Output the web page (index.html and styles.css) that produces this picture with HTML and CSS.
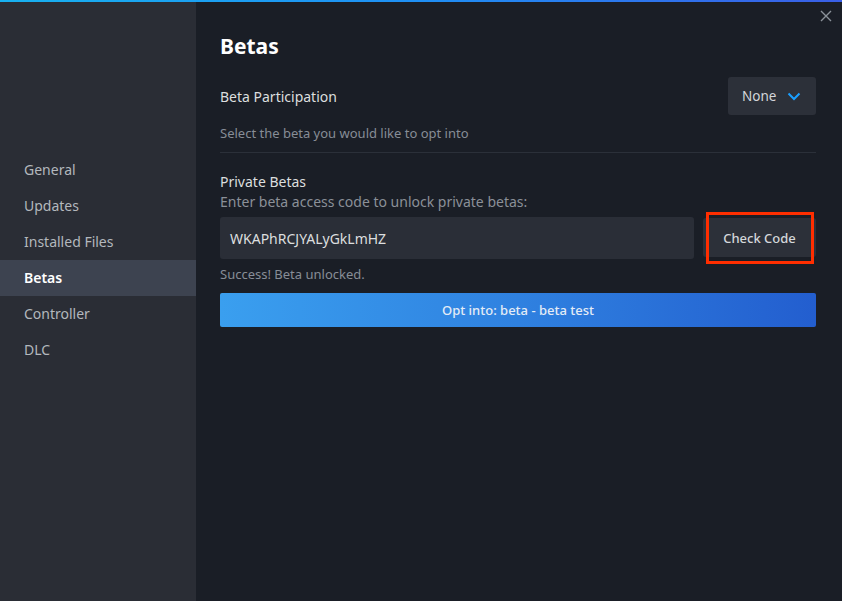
FILE: index.html
```html
<!DOCTYPE html>
<html>
<head>
<meta charset="utf-8">
<link rel="stylesheet" href="styles.css">
</head>
<body>
<div class="topline"></div>
<div class="app">
  <nav class="sidebar">
    <div class="nav-item">General</div>
    <div class="nav-item">Updates</div>
    <div class="nav-item">Installed Files</div>
    <div class="nav-item active">Betas</div>
    <div class="nav-item">Controller</div>
    <div class="nav-item">DLC</div>
  </nav>
  <main class="content">
    <button class="close" aria-label="Close">
      <svg width="12" height="12" viewBox="0 0 12 12"><path d="M1 1L11 11M11 1L1 11" stroke="#8b929a" stroke-width="1.4" fill="none"/></svg>
    </button>
    <h1 class="title">Betas</h1>
    <div class="row-participation">
      <div class="label">Beta Participation</div>
      <div class="dropdown">
        <span>None</span>
        <svg width="14" height="9" viewBox="0 0 14 9"><path d="M1.5 1.5L7 7L12.5 1.5" stroke="#1a9fff" stroke-width="2" fill="none"/></svg>
      </div>
    </div>
    <div class="desc">Select the beta you would like to opt into</div>
    <div class="sep"></div>
    <div class="label private">Private Betas</div>
    <div class="subdesc">Enter beta access code to unlock private betas:</div>
    <div class="code-row">
      <div class="code-input">WKAPhRCJYALyGkLmHZ</div>
      <div class="check-wrap">
        <button class="check-btn">Check Code</button>
        <div class="highlight"></div>
      </div>
    </div>
    <div class="success">Success! Beta unlocked.</div>
    <button class="opt-btn">Opt into: beta - beta test</button>
  </main>
</div>
</body>
</html>
```
FILE: styles.css
```css
* { box-sizing: border-box; }
html, body { margin: 0; padding: 0; }
body {
  width: 842px;
  height: 601px;
  overflow: hidden;
  background: #1a1e26;
  font-family: "Noto Sans", "Open Sans", sans-serif;
  display: flex;
  flex-direction: column;
}
.topline {
  height: 2px;
  background: linear-gradient(90deg, #18b1f0 0%, #1f8ff4 50%, #3a5fe6 100%);
  flex: none;
}
.app {
  flex: 1;
  display: flex;
}
.sidebar {
  width: 196px;
  background: #2a2d35;
  padding-top: 150px;
  display: flex;
  flex-direction: column;
}
.nav-item {
  height: 36px;
  line-height: 36px;
  padding-left: 24px;
  font-size: 14px;
  color: #b3b8bd;
}
.nav-item.active {
  background: #3d4350;
  color: #ffffff;
  font-weight: 600;
}
.content {
  flex: 1;
  position: relative;
  padding: 30px 26px 0 24px;
  display: flex;
  flex-direction: column;
}
.close {
  position: absolute;
  top: 8px;
  right: 10px;
  width: 12px;
  height: 12px;
  padding: 0;
  border: 0;
  background: none;
  display: flex;
}
.title {
  margin: 0;
  font-size: 21px;
  line-height: 28px;
  font-weight: 700;
  color: #ffffff;
}
.row-participation {
  margin-top: 17px;
  display: flex;
  align-items: center;
  justify-content: space-between;
}
.label {
  font-size: 14px;
  color: #dcdedf;
}
.dropdown {
  width: 88px;
  height: 38px;
  background: #2c3039;
  border-radius: 3px;
  display: flex;
  align-items: center;
  padding-left: 14px;
  gap: 11px;
  font-size: 13.5px;
  color: #d4d6d9;
}
.desc {
  margin-top: 7px;
  font-size: 13px;
  line-height: 22px;
  color: #878d96;
}
.sep {
  margin-top: 8px;
  height: 1px;
  background: #2b3039;
}
.private {
  margin-top: 19px;
  line-height: 20px;
}
.subdesc {
  font-size: 14px;
  line-height: 20px;
  color: #8b9098;
}
.code-row {
  margin-top: 5px;
  display: flex;
  align-items: center;
  gap: 9px;
}
.code-input {
  flex: 1;
  height: 42px;
  background: #2a2e37;
  border-radius: 3px;
  padding-left: 10px;
  display: flex;
  align-items: center;
  font-size: 14px;
  color: #dcdedf;
}
.check-wrap {
  position: relative;
  width: 113px;
  height: 42px;
  display: flex;
}
.check-btn {
  flex: 1;
  margin: 1px 0 2px 0;
  border: 0;
  border-radius: 3px;
  background: #2c3039;
  font-family: inherit;
  font-size: 13px;
  font-weight: 500;
  color: #d4d7da;
  padding: 0;
}
.highlight {
  position: absolute;
  left: 3px;
  top: -5px;
  width: 108px;
  height: 52px;
  border: 3px solid #ff2e00;
}
.success {
  margin-top: 5px;
  font-size: 13px;
  line-height: 20px;
  color: #878d96;
}
.opt-btn {
  margin-top: 9px;
  height: 34px;
  border: 0;
  border-radius: 2px;
  background: linear-gradient(90deg, #3a9fef 0%, #2f81e0 50%, #235ecf 100%);
  font-family: inherit;
  font-size: 13px;
  font-weight: 500;
  color: #e4ecf6;
  padding: 0;
}
```
